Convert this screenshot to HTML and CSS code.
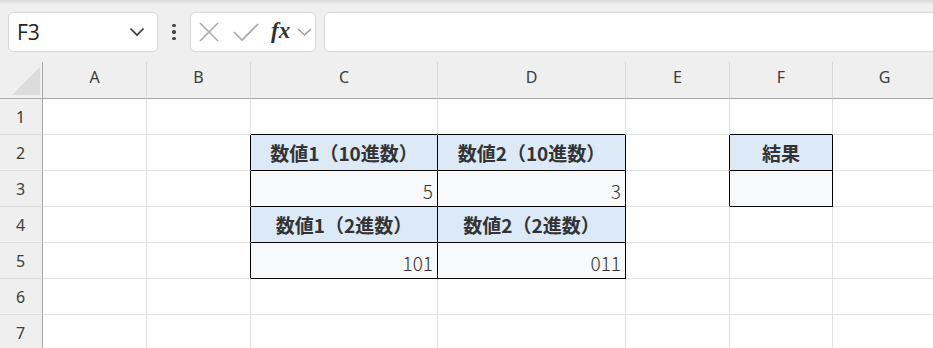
FILE: index.html
```html
<!DOCTYPE html>
<html lang="ja">
<head>
    <meta charset="UTF-8">
    <title>Sheet</title>
    <link rel="stylesheet" href="styles.css">
</head>
<body>
    <div class="toolbar">
        <div class="name-box">
            <span class="name-text">F3</span>
            <svg class="chev" width="16" height="10" viewBox="0 0 16 10"><path d="M1.5 1.5 L8 8 L14.5 1.5" fill="none" stroke="#333" stroke-width="1.6"/></svg>
        </div>
        <div class="dots"><span></span><span></span><span></span></div>
        <div class="fx-group">
            <svg class="ic-x" width="20" height="20" viewBox="0 0 20 20"><path d="M1 1 L19 19 M19 1 L1 19" stroke="#a8a8a8" stroke-width="1.6" fill="none"/></svg>
            <svg class="ic-ok" width="26" height="20" viewBox="0 0 26 20"><path d="M1 10 L9 18 L25 2" stroke="#a8a8a8" stroke-width="1.6" fill="none"/></svg>
            <span class="fx">fx</span>
            <svg class="chev-sm" width="15" height="8" viewBox="0 0 15 8"><path d="M1 1 L7.5 7 L14 1" fill="none" stroke="#999" stroke-width="1.4"/></svg>
        </div>
        <div class="formula-bar"></div>
    </div>

    <div class="sheet">
        <!-- header row -->
        <div class="corner"><div class="tri"></div></div>
        <div class="col-head">A</div>
        <div class="col-head">B</div>
        <div class="col-head">C</div>
        <div class="col-head">D</div>
        <div class="col-head">E</div>
        <div class="col-head">F</div>
        <div class="col-head">G</div>

        <!-- row 1 -->
        <div class="row-head">1</div>
        <div class="cell"></div>
        <div class="cell"></div>
        <div class="cell bb-k"></div>
        <div class="cell bb-k"></div>
        <div class="cell"></div>
        <div class="cell bb-k"></div>
        <div class="cell"></div>

        <!-- row 2 -->
        <div class="row-head">2</div>
        <div class="cell"></div>
        <div class="cell br-k"></div>
        <div class="cell box label">数値1（10進数）</div>
        <div class="cell box label">数値2（10進数）</div>
        <div class="cell br-k"></div>
        <div class="cell box label">結果</div>
        <div class="cell"></div>

        <!-- row 3 -->
        <div class="row-head">3</div>
        <div class="cell"></div>
        <div class="cell br-k"></div>
        <div class="cell box value">5</div>
        <div class="cell box value">3</div>
        <div class="cell br-k"></div>
        <div class="cell box value"></div>
        <div class="cell"></div>

        <!-- row 4 -->
        <div class="row-head">4</div>
        <div class="cell"></div>
        <div class="cell br-k"></div>
        <div class="cell box label">数値1（2進数）</div>
        <div class="cell box label">数値2（2進数）</div>
        <div class="cell"></div>
        <div class="cell"></div>
        <div class="cell"></div>

        <!-- row 5 -->
        <div class="row-head">5</div>
        <div class="cell"></div>
        <div class="cell br-k"></div>
        <div class="cell box value">101</div>
        <div class="cell box value">011</div>
        <div class="cell"></div>
        <div class="cell"></div>
        <div class="cell"></div>

        <!-- row 6 -->
        <div class="row-head">6</div>
        <div class="cell"></div>
        <div class="cell"></div>
        <div class="cell"></div>
        <div class="cell"></div>
        <div class="cell"></div>
        <div class="cell"></div>
        <div class="cell"></div>

        <!-- row 7 -->
        <div class="row-head">7</div>
        <div class="cell"></div>
        <div class="cell"></div>
        <div class="cell"></div>
        <div class="cell"></div>
        <div class="cell"></div>
        <div class="cell"></div>
        <div class="cell"></div>
    </div>
</body>
</html>
```

FILE: styles.css
```css
:root {
    --chrome: #efefef;
    --grid: #e1e1e1;
    --head-line: #a8a8a8;
    --head-sep: #d9d9d9;
    --label-bg: #dce9f6;
    --value-bg: #f8f9fb;
    --text: #333;
}
* { box-sizing: border-box; }
html, body {
    margin: 0;
    width: 933px;
    height: 348px;
    overflow: hidden;
    background: var(--chrome);
    font-family: 'Noto Sans', 'Noto Sans CJK JP', sans-serif;
    color: var(--text);
}
.toolbar {
    display: flex;
    align-items: flex-start;
    height: 62px;
    padding: 12px 0 0 8px;
    background: linear-gradient(#dcdcdc, var(--chrome) 5px);
}
.name-box {
    width: 150px;
    height: 40px;
    background: #fff;
    border: 1px solid #d6d6d6;
    border-radius: 5px;
    display: flex;
    align-items: center;
    justify-content: space-between;
    padding: 0 12px 0 8px;
}
.name-text {
    font-family: 'Open Sans', 'Noto Sans', sans-serif;
    font-size: 21px;
    color: #222;
}
.dots {
    width: 32px;
    height: 40px;
    display: flex;
    flex-direction: column;
    align-items: center;
    justify-content: center;
    gap: 3px;
}
.dots span {
    width: 3.5px;
    height: 3.5px;
    border-radius: 50%;
    background: #444;
}
.fx-group {
    width: 126px;
    height: 40px;
    background: #fff;
    border: 1px solid #d6d6d6;
    border-radius: 5px;
    display: flex;
    align-items: center;
    padding-left: 8px;
}
.ic-x { margin-right: 14px; }
.ic-ok { margin-right: 12px; }
.fx {
    font-family: 'Liberation Serif', serif;
    font-style: italic;
    font-weight: bold;
    font-size: 23px;
    color: #333;
    margin-right: 7px;
    margin-top: -3px;
}
.formula-bar {
    flex: 1;
    height: 40px;
    margin-left: 8px;
    margin-right: -10px;
    background: #fff;
    border: 1px solid #d6d6d6;
    border-radius: 5px;
}
.sheet {
    display: grid;
    grid-template-columns: 43px 104px 104px 187px 188px 104px 103px 104px;
    grid-template-rows: 37px repeat(7, 36px);
}
.corner {
    background: var(--chrome);
    border-right: 1px solid var(--head-line);
    border-bottom: 1px solid var(--head-line);
    display: flex;
    align-items: flex-end;
    justify-content: flex-end;
    padding: 0 2px 3px 0;
}
.tri {
    width: 28px;
    height: 28px;
    background: #dcdcdc;
    clip-path: polygon(100% 0, 100% 100%, 0 100%);
}
.col-head {
    background: var(--chrome);
    border-right: 1px solid var(--head-sep);
    border-bottom: 1px solid var(--head-line);
    display: flex;
    align-items: center;
    justify-content: center;
    font-size: 16px;
    color: #3c3c3c;
    padding-bottom: 6px;
}
.row-head {
    background: var(--chrome);
    border-right: 1px solid var(--head-line);
    border-bottom: 1px solid var(--head-sep);
    display: flex;
    align-items: center;
    justify-content: center;
    font-size: 16px;
    color: #3c3c3c;
    padding-right: 1px;
}
.cell {
    background: #fff;
    border-right: 1px solid var(--grid);
    border-bottom: 1px solid var(--grid);
    display: flex;
    align-items: center;
}
.br-k { border-right-color: #000; }
.bb-k { border-bottom-color: #000; }
.box {
    border-right-color: #000;
    border-bottom-color: #000;
}
.label {
    background: var(--label-bg);
    justify-content: center;
    font-family: 'Noto Sans CJK JP', sans-serif;
    font-weight: bold;
    font-size: 19px;
    color: #333;
}
.value {
    background: var(--value-bg);
    justify-content: flex-end;
    padding-right: 4px;
    padding-top: 3px;
    font-family: 'Noto Sans CJK JP', sans-serif;
    font-weight: 300;
    font-size: 19px;
    color: #333;
}
```
